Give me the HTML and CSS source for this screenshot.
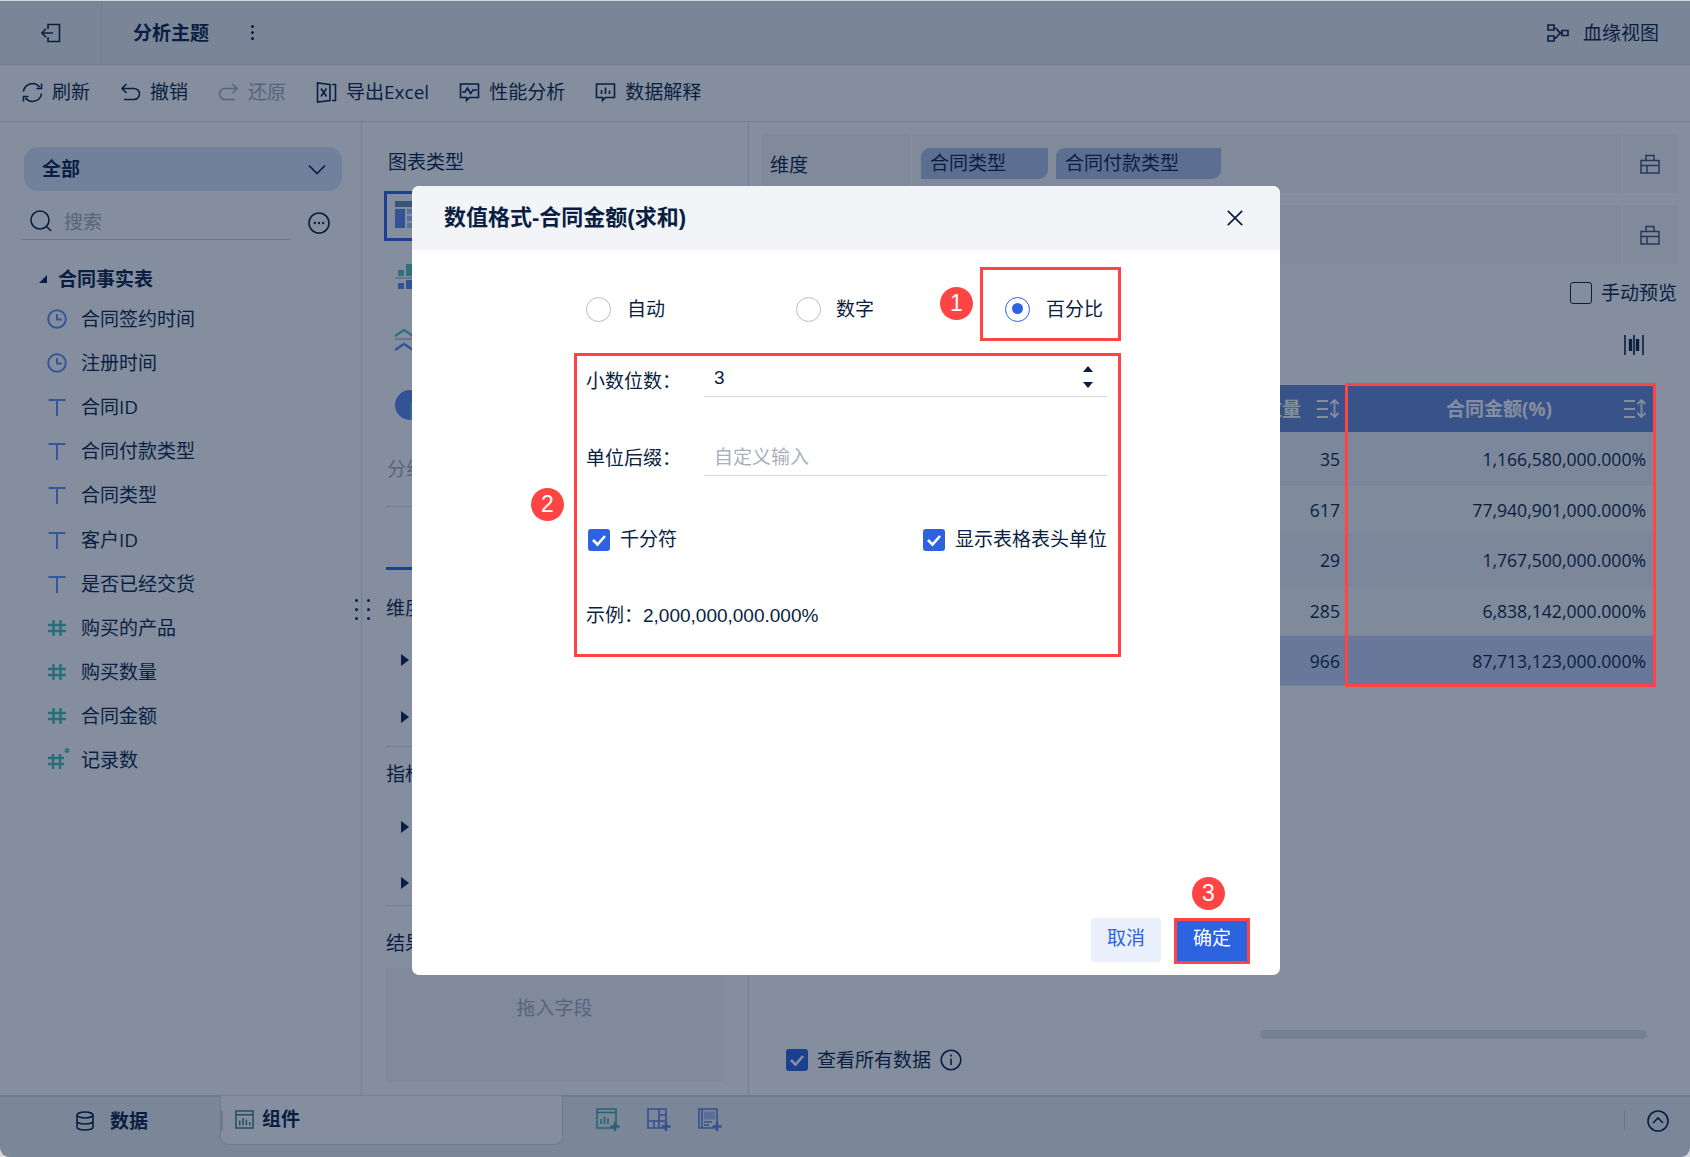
FILE: index.html
```html
<!DOCTYPE html>
<html lang="zh-CN">
<head>
<meta charset="utf-8">
<title>数值格式</title>
<link rel="stylesheet" href="styles.css">
</head>
<body>
<div class="app">
  <header class="topbar">
    <div class="back-cell">
      <svg class="ic20" viewBox="0 0 20 20"><path d="M7 6V1.500h11.500v17H7V14M.8 10H12M5 5.800.8 10 5 14.200"/></svg>
    </div>
    <div class="title">分析主题</div>
    <div class="kebab"><i></i><i></i><i></i></div>
    <div class="lineage">
      <svg class="ic-lineage" viewBox="0 0 22 18"><path d="M1 1h6v5H1zM1 12h6v5H1zM15 6.500h6v5h-6zM7 3.500c4 0 3 5.500 8 5.500M7 14.500c4 0 3-5.500 8-5.500"/></svg>
      <span>血缘视图</span>
    </div>
  </header>

  <nav class="toolbar">
    <div class="tool"><svg class="ic21" viewBox="0 0 21 21"><path d="M1.500 9.500A9 9 0 0 1 17.500 5M19.500 1.500V6.500H14.500M19.500 11.500A9 9 0 0 1 3.500 16M1.500 19.500V14.500H6.500"/></svg><span>刷新</span></div>
    <div class="tool"><svg class="ic21" viewBox="0 0 21 21"><path d="M6.500 2 2 6.500 6.500 11M2.500 6.500H14a5.500 5.500 0 0 1 0 11H4"/></svg><span>撤销</span></div>
    <div class="tool tool-off"><svg class="ic21" viewBox="0 0 21 21"><path d="M14.500 2 19 6.500 14.500 11M18.500 6.500H7a5.500 5.500 0 0 0 0 11h10"/></svg><span>还原</span></div>
    <div class="tool"><svg class="ic21" viewBox="0 0 21 21"><path d="M14 2.500 1.500 1v19L14 18.500zM5 6.500l5.500 8M10.500 6.500l-5.500 8M16 2.500h3.500v16H16"/></svg><span>导出Excel</span></div>
    <div class="tool"><svg class="ic21" viewBox="0 0 21 21"><path d="M1.500 2h18v13.500h-9l-3 3v-3h-6zM3 10h3l2.500-4 3 5.500 2.500-3.500h4"/></svg><span>性能分析</span></div>
    <div class="tool"><svg class="ic21" viewBox="0 0 21 21"><path d="M1.500 2h18v13.500h-9l-3 3v-3h-6zM6.500 8v4M10.500 5.500V12M14.500 8.500V12"/></svg><span>数据解释</span></div>
  </nav>

  <main class="workspace">
    <aside class="sidebar">
      <div class="select"><b>全部</b><svg class="chev" viewBox="0 0 18 11"><path d="M1 1.500 9 9.500l8-8"/></svg></div>
      <div class="search-row">
        <div class="search">
          <svg class="ic22" viewBox="0 0 22 22"><circle cx="10" cy="10" r="9"/><path d="m16.500 16.500 4.500 4.500"/></svg>
          <span>搜索</span>
        </div>
        <svg class="ic22 more" viewBox="0 0 22 22"><circle cx="11" cy="11" r="10"/><path class="dots" d="M6.800 11h.01M11 11h.01M15.200 11h.01"/></svg>
      </div>
      <div class="tree-head"><i class="corner"></i><b>合同事实表</b></div>
      <ul class="fields">
        <li><svg class="ficon clock" viewBox="0 0 20 20"><circle cx="10" cy="10" r="8.800"/><path d="M10 5v5.500h5"/></svg>合同签约时间</li>
        <li><svg class="ficon clock" viewBox="0 0 20 20"><circle cx="10" cy="10" r="8.800"/><path d="M10 5v5.500h5"/></svg>注册时间</li>
        <li><svg class="ficon clock" viewBox="0 0 20 20"><path d="M1.500 3h17M10 3v16"/></svg>合同ID</li>
        <li><svg class="ficon clock" viewBox="0 0 20 20"><path d="M1.500 3h17M10 3v16"/></svg>合同付款类型</li>
        <li><svg class="ficon clock" viewBox="0 0 20 20"><path d="M1.500 3h17M10 3v16"/></svg>合同类型</li>
        <li><svg class="ficon clock" viewBox="0 0 20 20"><path d="M1.500 3h17M10 3v16"/></svg>客户ID</li>
        <li><svg class="ficon clock" viewBox="0 0 20 20"><path d="M1.500 3h17M10 3v16"/></svg>是否已经交货</li>
        <li><svg class="ficon hash" viewBox="0 0 20 20"><path d="M6.500 2v16M13.500 2v16M1 7h18M1 13h18"/></svg>购买的产品</li>
        <li><svg class="ficon hash" viewBox="0 0 20 20"><path d="M6.500 2v16M13.500 2v16M1 7h18M1 13h18"/></svg>购买数量</li>
        <li><svg class="ficon hash" viewBox="0 0 20 20"><path d="M6.500 2v16M13.500 2v16M1 7h18M1 13h18"/></svg>合同金额</li>
        <li><svg class="ficon hash" viewBox="0 0 20 20"><path d="M6 4v15M13 4v15M1 8h16M1 14h16"/><path class="star" d="M20 -2v5M17.800 -.8l4.400 2.600M22.200 -.8l-4.400 2.600"/></svg>记录数</li>
      </ul>
    </aside>

    <section class="config">
      <div class="grip"><i></i><i></i><i></i><i></i><i></i><i></i></div>
      <div class="cfg-title">图表类型</div>
      <div class="chart-list">
        <div class="chart-item chart-on">
          <svg class="chart-ic" viewBox="0 0 40 30"><rect x="0" y="0" width="40" height="6" fill="#6e86ad"/><rect x="0" y="8" width="10" height="19" fill="#5d86ee"/><rect x="12" y="8" width="28" height="5" fill="#a9c1f5"/><rect x="12" y="15" width="28" height="5" fill="#a9c1f5"/><rect x="12" y="22" width="28" height="5" fill="#a9c1f5"/></svg>
        </div>
        <div class="chart-item">
          <svg class="chart-ic" viewBox="0 0 40 30"><rect x="3" y="6" width="6" height="6" fill="#51c8ba"/><rect x="11" y="0" width="8" height="12" fill="#51c8ba"/><rect x="0" y="13" width="40" height="2" fill="#c8cdd8"/><rect x="3" y="19" width="6" height="6" fill="#5d86ee"/><rect x="11" y="16" width="8" height="9" fill="#5d86ee"/></svg>
        </div>
        <div class="chart-item">
          <svg class="chart-ic" viewBox="0 0 40 30"><path d="M0 9 9 3l9 6" fill="none" stroke="#51c8ba" stroke-width="2.400"/><rect x="0" y="11" width="40" height="2" fill="#c8cdd8"/><path d="M0 23l9-6 9 6" fill="none" stroke="#5d86ee" stroke-width="2.400"/></svg>
        </div>
        <div class="chart-item">
          <svg class="chart-ic" viewBox="0 0 40 30"><circle cx="15" cy="15" r="15" fill="#5d86ee"/><rect x="15" y="13" width="25" height="17" fill="#51c8ba"/></svg>
        </div>
      </div>
      <div class="cfg-sub">分组表</div>
      <div class="cfg-tab"></div>
      <div class="cfg-label cfg-dim">维度</div>
      <div class="cfg-arrow cfg-a1"><i></i></div>
      <div class="cfg-arrow cfg-a2"><i></i></div>
      <div class="cfg-label cfg-measure">指标</div>
      <div class="cfg-arrow cfg-a3"><i></i></div>
      <div class="cfg-arrow cfg-a4"><i></i></div>
      <div class="cfg-label cfg-result">结果</div>
      <div class="dropbox">拖入字段</div>
    </section>

    <section class="canvas">
      <div class="shelf">
        <div class="shelf-label">维度</div>
        <div class="shelf-tags"><span class="tag">合同类型</span><span class="tag tag-wide">合同付款类型</span></div>
        <div class="shelf-end"><svg class="ic-case" viewBox="0 0 20 20"><path d="M1 6.500h18V19H1zM6 6.500V1.500h8v5M1 11.500h18M7 11.500V19"/></svg></div>
      </div>
      <div class="shelf shelf-2">
        <div class="shelf-label"></div>
        <div class="shelf-tags"></div>
        <div class="shelf-end"><svg class="ic-case" viewBox="0 0 20 20"><path d="M1 6.500h18V19H1zM6 6.500V1.500h8v5M1 11.500h18M7 11.500V19"/></svg></div>
      </div>
      <div class="preview"><i class="box"></i><span>手动预览</span></div>
      <div class="bars-row"><svg class="ic-bars" viewBox="0 0 20 20"><path d="M1 0v20M19 0v20"/><path class="thick" d="M6.500 4v12M13.500 4v12"/><path d="M10 0v20"/></svg></div>

      <div class="table">
        <div class="tr th"><div class="c1"><span>购买数量</span><svg class="ic-sort" viewBox="0 0 22 20"><path d="M0 2h11M0 10h11M0 18h11M17.500 1v17M13.500 5l4-4 4 4M13.500 14l4 4 4-4"/></svg></div><div class="c2"><b>合同金额(%)</b><svg class="ic-sort" viewBox="0 0 22 20"><path d="M0 2h11M0 10h11M0 18h11M17.500 1v17M13.500 5l4-4 4 4M13.500 14l4 4 4-4"/></svg></div></div>
        <div class="tr first"><div class="c1">35</div><div class="c2">1,166,580,000.000%</div></div>
        <div class="tr even"><div class="c1">617</div><div class="c2">77,940,901,000.000%</div></div>
        <div class="tr"><div class="c1">29</div><div class="c2">1,767,500,000.000%</div></div>
        <div class="tr even"><div class="c1">285</div><div class="c2">6,838,142,000.000%</div></div>
        <div class="tr total"><div class="c1">966</div><div class="c2">87,713,123,000.000%</div></div>
      </div>

      <div class="canvas-foot">
        <div class="hscroll"></div>
        <div class="see-all">
          <i class="check check-dim"><svg viewBox="0 0 22 22"><path d="m5 11 4.500 4.500L17 7"/></svg></i>
          <span>查看所有数据</span>
          <svg class="ic22 info" viewBox="0 0 22 22"><circle cx="11" cy="11" r="9.800"/><path d="M11 9.500V16M11 5.500v2"/></svg>
        </div>
      </div>
    </section>
  </main>

  <footer class="bottombar">
    <div class="tab-data">
      <svg class="ic-db" viewBox="0 0 18 20"><ellipse cx="9" cy="4" rx="8" ry="3"/><path d="M1 4v12c0 1.700 3.600 3 8 3s8-1.300 8-3V4M1 10c0 1.700 3.600 3 8 3s8-1.300 8-3"/></svg>
      <b>数据</b>
    </div>
    <div class="tab-widget">
      <svg class="ic-widget" viewBox="0 0 20 20"><path d="M1 1h18v18H1zM1 5h18"/><path d="M5 16v-5M8.500 16V8.500M12 16v-6M15.500 16v-3.500"/></svg>
      <b>组件</b>
    </div>
    <div class="add-icons">
      <svg class="ic-add" viewBox="0 0 24 24"><path class="line-teal" d="M1 1h19v19H1zM1 4.500h19M5 16v-5M8.500 16V8.500M12 16v-6"/><path class="plus-teal" d="M19 14v9M14.500 18.500h9"/></svg>
      <svg class="ic-add" viewBox="0 0 24 24"><path class="line-blue" d="M1 1h18v19H1zM12 1v19M1 13h18M12 7h7M7 13v7"/><path class="plus-blue" d="M19 14v9M14.500 18.500h9"/></svg>
      <svg class="ic-add" viewBox="0 0 24 24"><path class="line-blue" d="M1 1h18v19H1zM4 1v19"/><rect class="fill-blue" x="6" y="3.500" width="11" height="8"/><path class="line-blue" d="M6 14h8M6 17h5"/><path class="plus-blue" d="M19 14v9M14.500 18.500h9"/></svg>
    </div>
    <div class="bottom-right">
      <i class="vsep"></i>
      <svg class="ic22" viewBox="0 0 22 22"><circle cx="11" cy="11" r="10"/><path d="m6 13 5-5 5 5"/></svg>
    </div>
  </footer>

  <div class="scrim"></div>

  <div class="hl-col"></div>

  <div class="modal">
    <div class="modal-head">
      <b>数值格式-合同金额(求和)</b>
      <svg class="ic-close" viewBox="0 0 16 16"><path d="m.8.800 14.400 14.400M15.200.800.800 15.200"/></svg>
    </div>
    <div class="radio-row">
      <label class="radio-item r-first"><i class="radio"></i><span>自动</span></label>
      <label class="radio-item r-second"><i class="radio"></i><span>数字</span></label>
      <label class="radio-item r-boxed"><i class="badge badge-1">1</i><i class="radio radio-on"></i><span>百分比</span></label>
    </div>
    <div class="format-box">
      <i class="badge badge-2">2</i>
      <div class="field f-decimals">
        <span class="f-label">小数位数：</span>
        <div class="f-input"><span class="f-val">3</span><span class="spin"><i class="up"></i><i class="down"></i></span></div>
      </div>
      <div class="field f-suffix">
        <span class="f-label">单位后缀：</span>
        <div class="f-input"><span class="f-ph">自定义输入</span></div>
      </div>
      <div class="checks">
        <label class="chk"><i class="check"><svg viewBox="0 0 22 22"><path d="m5 11 4.500 4.500L17 7"/></svg></i>千分符</label>
        <label class="chk"><i class="check"><svg viewBox="0 0 22 22"><path d="m5 11 4.500 4.500L17 7"/></svg></i>显示表格表头单位</label>
      </div>
      <div class="example">示例：2,000,000,000.000%</div>
    </div>
    <div class="modal-foot">
      <button class="btn btn-ghost">取消</button>
      <button class="btn btn-primary"><i class="badge badge-3">3</i>确定</button>
    </div>
  </div>
</div>
</body>
</html>
```
FILE: styles.css
```css
* { box-sizing: border-box; }
html, body { margin: 0; padding: 0; background: #d8d8d8; }
body { font-family: "Open Sans", "Noto Sans CJK SC", sans-serif; font-size: 19px; line-height: 24px; color: #091e40; }
i { display: block; font-style: normal; }
ul { list-style: none; margin: 0; padding: 0; }
svg { display: block; flex: none; fill: none; stroke: #091e40; stroke-width: 1.6; }

.app { position: relative; width: 1690px; height: 1157px; display: flex; flex-direction: column; background: #fff; border-top: 1px solid #d8d8d8; border-radius: 0 0 9px 9px; overflow: hidden; }

/* top bar */
.topbar { height: 64px; flex: none; display: flex; align-items: center; background: #edecf0; border-bottom: 1px solid #dcdde3; }
.back-cell { width: 102px; height: 100%; display: flex; align-items: center; padding-left: 41px; border-right: 1px solid #dcdde3; }
.ic20 { width: 20px; height: 20px; }
.title { margin-left: 31px; font-weight: 700; }
.kebab { margin-left: 42px; display: flex; flex-direction: column; gap: 3px; }
.kebab i { width: 3px; height: 3px; border-radius: 50%; background: #091e40; }
.lineage { margin-left: auto; margin-right: 31px; display: flex; align-items: center; gap: 14px; }
.ic-lineage { width: 22px; height: 18px; }

/* toolbar */
.toolbar { height: 57px; flex: none; display: flex; align-items: center; gap: 30px; padding: 0 0 2px 22px; background: #fff; border-bottom: 1px solid #dcdde3; }
.tool { display: flex; align-items: center; gap: 9px; }
.ic21 { width: 21px; height: 21px; }
.tool-off { color: #a4abbb; }
.tool-off svg { stroke: #a4abbb; }

/* workspace */
.workspace { flex: 1; display: flex; min-height: 0; }
.sidebar { width: 362px; flex: none; border-right: 1px solid #dcdde3; padding: 25px 0 0 22px; }
.select { width: 318px; height: 44px; margin-left: 2px; display: flex; align-items: center; justify-content: space-between; padding: 0 16px 0 18px; background: #d9e4f8; border-radius: 14px; }
.chev { width: 18px; height: 11px; }
.search-row { display: flex; align-items: center; margin-top: 14px; }
.search { width: 268px; height: 35px; display: flex; align-items: flex-start; gap: 12px; padding: 5px 0 0 8px; color: #a6acba; border-bottom: 1px solid #c9ccd8; }
.ic22 { width: 22px; height: 22px; }
.more { margin-left: 18px; }
.dots { stroke-width: 2.4; stroke-linecap: round; }
.tree-head { display: flex; align-items: center; gap: 11px; margin-top: 27px; padding-left: 17px; height: 24px; }
.corner { width: 0; height: 0; border-style: solid; border-width: 0 0 8px 8px; border-color: transparent transparent #091e40 transparent; }
.fields { margin-top: 6px; }
.fields li { height: 44.100px; display: flex; align-items: center; gap: 14px; padding-left: 25px; }
.ficon { width: 20px; height: 20px; stroke-width: 2; overflow: visible; }
.clock { stroke: #5f8ff5; }
.hash { stroke: #45c0b0; stroke-width: 2.4; }
.star { stroke-width: 1.5; }

/* config column */
.config { position: relative; width: 387px; flex: none; border-right: 1px solid #dcdde3; padding: 28px 0 0 24px; }
.grip { position: absolute; left: -7px; top: 477px; display: grid; grid-template-columns: 3px 3px; column-gap: 9px; row-gap: 6px; }
.grip i { width: 3px; height: 3px; border-radius: 50%; background: #091e40; }
.cfg-title { height: 24px; margin-left: 2px; }
.chart-list { display: flex; flex-direction: column; gap: 13px; margin: 17px 0 0 -2px; }
.chart-item { width: 56px; height: 50px; display: flex; align-items: center; padding-left: 8px; border: 3px solid transparent; }
.chart-on { border-color: #2f62e0; }
.chart-ic { width: 40px; height: 30px; stroke: none; }
.cfg-sub { margin-top: 27px; padding: 0 0 25px 1px; color: #a6acba; border-bottom: 1px solid #dcdde3; width: 330px; }
.cfg-tab { width: 120px; height: 63px; border-bottom: 3px solid #2f62e0; }
.cfg-label { height: 24px; }
.cfg-dim { margin-top: 26px; }
.cfg-arrow { height: 24px; display: flex; align-items: center; padding-left: 15px; }
.cfg-arrow i { width: 0; height: 0; border-style: solid; border-width: 6px 0 6px 8px; border-color: transparent transparent transparent #091e40; }
.cfg-a1 { margin-top: 28px; }
.cfg-a2 { margin-top: 33px; }
.cfg-measure { border-top: 1px solid #dcdde3; padding-top: 15px; height: 40px; width: 330px; margin-top: 17px; }
.cfg-a3 { margin-top: 29px; }
.cfg-a4 { margin-top: 32px; }
.cfg-result { margin-top: 10px; padding-top: 25px; height: 50px; width: 330px; border-top: 1px solid #dcdde3; }
.dropbox { width: 337px; height: 114px; margin-top: 13px; padding-top: 28px; text-align: center; color: #a6acba; background: #f6f6f7; }

/* canvas */
.canvas { flex: 1; display: flex; flex-direction: column; padding: 12px 0 0 13px; min-width: 0; }
.shelf { width: 915px; height: 59px; display: flex; gap: 2px; }
.shelf-2 { margin-top: 12px; }
.shelf-label { width: 148px; padding: 19px 0 0 8px; background: #f7f6f6; }
.shelf-tags { flex: 1; display: flex; gap: 8px; padding: 14px 0 0 9px; background: #f7f6f6; }
.shelf-end { width: 54px; display: flex; align-items: center; justify-content: center; background: #f7f6f6; }
.tag { width: 127px; height: 31px; padding: 3px 0 0 9px; line-height: 24px; background: #adc0e4; border-radius: 9px 0 9px 0; }
.tag-wide { width: 165px; }
.ic-case { width: 20px; height: 20px; stroke: #3f5377; stroke-width: 1.500; }
.preview { display: flex; align-items: center; gap: 9px; justify-content: flex-end; width: 915px; margin-top: 17px; height: 24px; }
.box { width: 22px; height: 22px; border: 1.500px solid #091e40; border-radius: 3px; }
.bars-row { display: flex; justify-content: flex-end; width: 882px; margin-top: 30px; }
.ic-bars { width: 20px; height: 20px; }
.thick { stroke-width: 3.4; }

/* table */
.table { align-self: flex-end; width: 553px; margin: 30px 37px 0 0; }
.tr { display: flex; height: 50.300px; padding-top: 1px; background: #eff0f8; border-bottom: 1px solid #e7e8f0; }
.tr.first { height: 53px; padding-top: 1px; }
.tr.even { background: #f5f6f6; }
.tr.total { background: #c5d2f4; }
.tr.th { height: 47px; padding-top: 0; background: #6788d4; color: #fff; border-bottom: 0; }
.c1 { width: 245px; display: flex; align-items: center; justify-content: flex-end; padding-right: 5px; font-size: 17.600px; gap: 16px; }
.c2 { flex: 1; display: flex; align-items: center; justify-content: flex-end; padding-right: 7px; font-size: 17.600px; position: relative; }
.th .c1 { padding-right: 6px; font-size: 19px; font-weight: 700; }
.th .c2 b { position: absolute; left: 0; right: 0; text-align: center; font-size: 19px; }
.ic-sort { width: 22px; height: 20px; stroke: #fff; stroke-width: 1.8; }

/* canvas foot */
.canvas-foot { margin-top: auto; }
.hscroll { width: 387px; height: 9px; margin-left: 498px; background: #e3e4e6; border-radius: 5px; }
.see-all { display: flex; align-items: center; gap: 9px; height: 24px; margin: 9px 0 23px 24px; }
.check { width: 22px; height: 22px; border-radius: 3px; background: #2d62e0; }
.check svg { width: 22px; height: 22px; stroke: #fff; stroke-width: 2.6; }
.info { margin-left: 0; }

/* bottom bar */
.bottombar { height: 62px; flex: none; display: flex; background: #edeef2; border-top: 2px solid #d3d6e0; }
.tab-data { width: 220px; display: flex; align-items: center; gap: 16px; padding: 0 0 13px 76px; }
.ic-db { width: 18px; height: 20px; }
.tab-widget { position: relative; width: 343px; height: 50px; margin-top: -2px; display: flex; align-items: center; gap: 8px; padding: 0 0 2px 14px; background: #fff; border: 1px solid #d3d6e0; border-top-color: #e6e7ee; border-radius: 0 0 9px 9px; }
.tab-widget::before { content: ""; position: absolute; left: 0; top: 15px; width: 2px; height: 20px; background: #d3d6e0; }
.ic-widget { width: 19px; height: 19px; stroke: #3e7d85; }
.add-icons { display: flex; gap: 27px; margin: 11px 0 0 33px; }
.ic-add { width: 24px; height: 24px; }
.line-teal { stroke: #42a8a8; }
.plus-teal { stroke: #42a8a8; stroke-width: 2.4; }
.line-blue { stroke: #5f7fe0; }
.plus-blue { stroke: #5f7fe0; stroke-width: 2.4; }
.fill-blue { fill: #a8c0f5; stroke: none; }
.bottom-right { margin-left: auto; display: flex; align-items: center; gap: 22px; padding: 0 21px 13px 0; }
.vsep { width: 1px; height: 19px; background: #c9ccd8; }

/* dim layer and dialog */
.scrim { position: absolute; inset: 0; background: rgba(9, 30, 64, .5); }
.hl-col { position: absolute; left: 1345px; top: 382px; width: 311px; height: 304px; border: 3px solid #ff4444; }

.modal { position: absolute; left: 412px; top: 185px; width: 868px; height: 789px; display: flex; flex-direction: column; background: #fff; border-radius: 7px; font-family: "Liberation Sans", "Noto Sans CJK SC", sans-serif; }
.modal-head { height: 64px; flex: none; display: flex; align-items: center; justify-content: space-between; padding: 0 37px 0 32px; background: #f2f4f8; border-radius: 7px 7px 0 0; font-size: 22px; }
.ic-close { width: 16px; height: 16px; stroke-width: 1.700; }

.radio-row { display: flex; height: 74px; margin: 17px 0 0 0; padding-left: 174px; }
.radio-item { display: flex; align-items: center; gap: 16px; padding-top: 10px; }
.radio-item span { margin-top: 2px; }
.r-first { width: 210px; }
.r-second { width: 184px; gap: 15px; }
.r-boxed { position: relative; width: 141px; padding-left: 22px; border: 3px solid #ff4444; }
.radio { width: 25px; height: 25px; border: 1.500px solid #b7bcc9; border-radius: 50%; }
.radio-on { position: relative; border-color: #2d62e0; }
.radio-on::after { content: ""; position: absolute; left: 5.500px; top: 5.500px; width: 11px; height: 11px; border-radius: 50%; background: #2d62e0; }

.badge { position: absolute; width: 33px; height: 33px; border-radius: 50%; background: #ff4444; color: #fff; font-size: 23px; line-height: 33px; text-align: center; }
.badge-1 { left: -43px; top: 17px; }
.badge-2 { left: -46px; top: 132px; }
.badge-3 { left: 15px; top: -44px; }

.format-box { position: relative; width: 547px; height: 304px; margin: 12px 0 0 162px; padding: 0 11px 0 9px; border: 3px solid #ff4444; }
.field { display: flex; align-items: flex-end; }
.f-decimals { height: 41px; }
.f-suffix { height: 42px; margin-top: 37px; }
.f-label { width: 118px; padding-bottom: 3px; }
.f-suffix .f-label { padding-bottom: 5px; }
.f-input { flex: 1; height: 100%; display: flex; justify-content: space-between; padding: 10px 14px 0 10px; border-bottom: 1px solid #d9dbe6; }
.f-suffix .f-input { padding-top: 12px; }
.f-ph { color: #a9afbd; }
.spin { display: flex; flex-direction: column; gap: 10px; }
.up { width: 0; height: 0; border-style: solid; border-width: 0 5px 6px 5px; border-color: transparent transparent #091e40 transparent; }
.down { width: 0; height: 0; border-style: solid; border-width: 6px 5px 0 5px; border-color: #091e40 transparent transparent transparent; }
.checks { display: flex; justify-content: space-between; margin-top: 52px; padding-left: 2px; }
.chk { display: flex; align-items: center; gap: 10px; }
.example { margin-top: 52px; }

.modal-foot { margin-top: auto; display: flex; align-items: flex-start; justify-content: flex-end; gap: 13px; padding: 0 30px 11px 0; }
.btn { position: relative; border: 0; padding: 0; font: inherit; cursor: pointer; }
.btn-ghost { width: 70px; height: 44px; padding-bottom: 2px; background: #e9effb; color: #2f63e0; border-radius: 3px; }
.btn-primary { width: 76px; height: 46px; padding-bottom: 5px; background: #2d62e0; color: #fff; border: 3px solid #ff4444; }
```
